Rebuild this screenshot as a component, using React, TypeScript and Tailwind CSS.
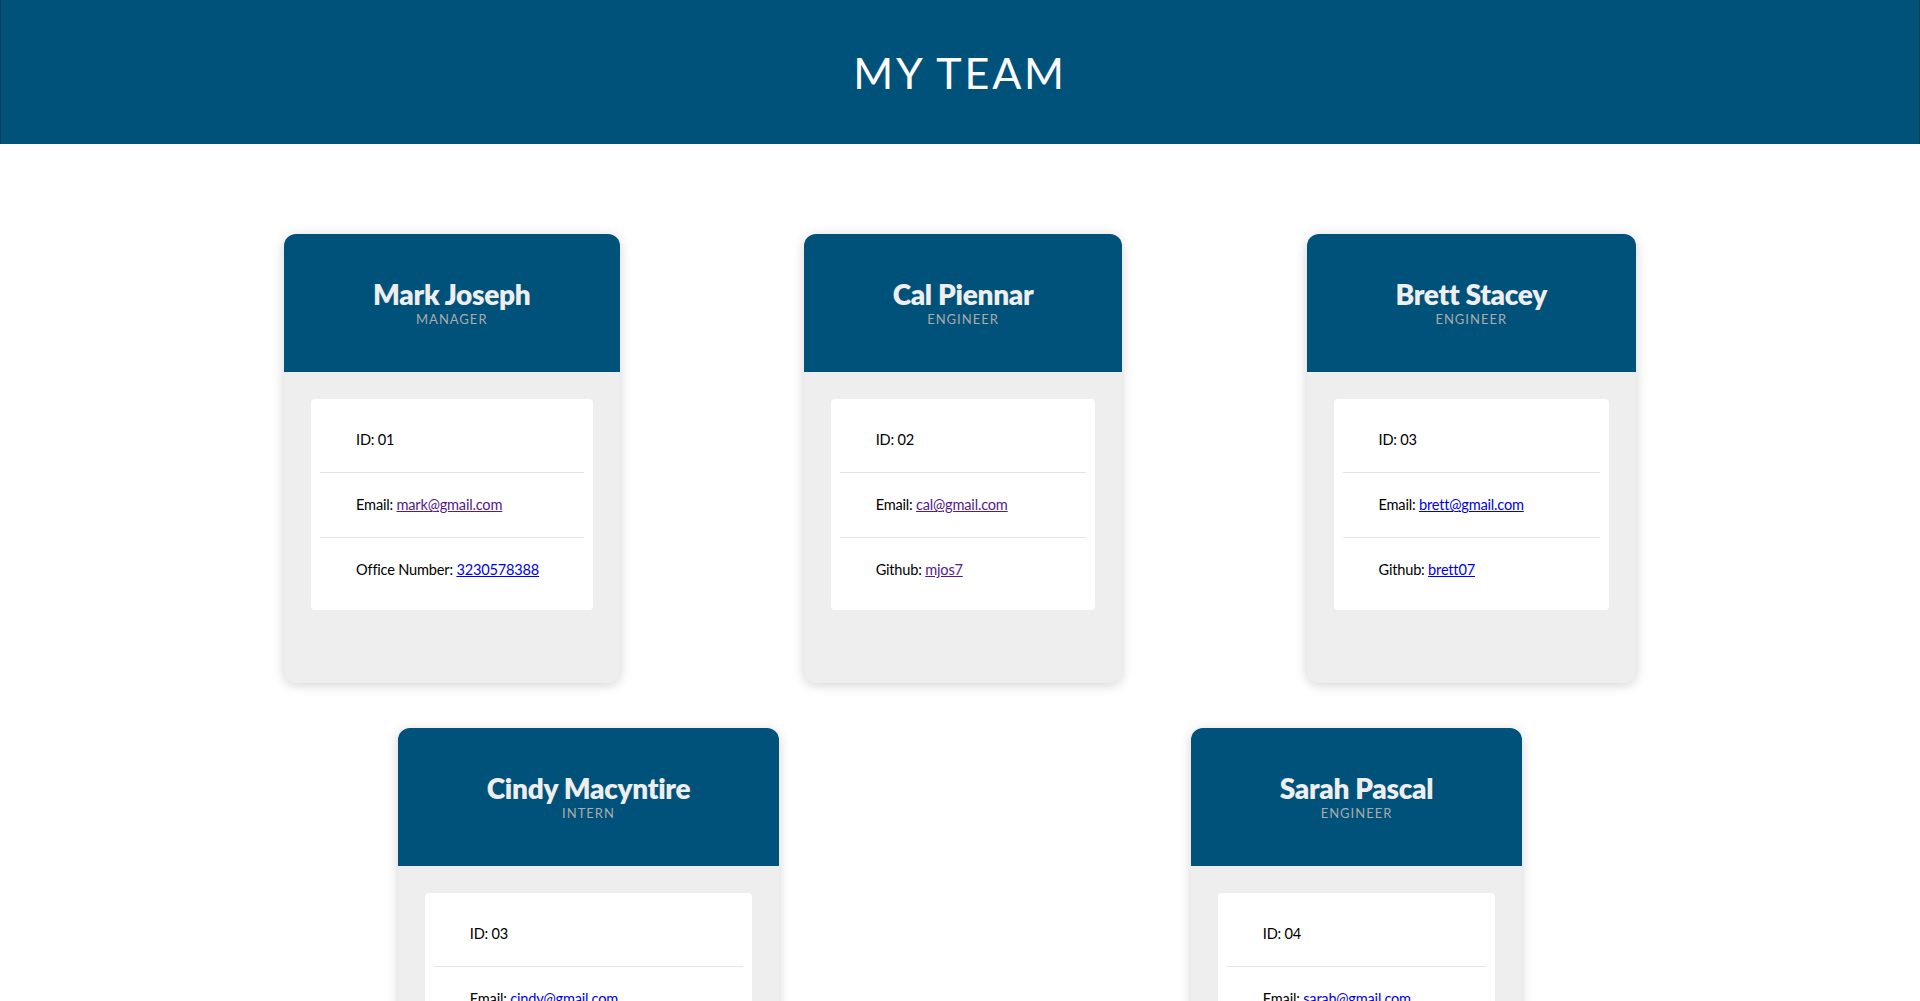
import React from "react";

type Line = { label: string; value?: string; link?: boolean; visited?: boolean };
type Member = { name: string; role: string; lines: Line[] };

const team: Member[] = [
  {
    name: "Mark Joseph",
    role: "Manager",
    lines: [
      { label: "ID: 01" },
      { label: "Email: ", value: "mark@gmail.com", link: true, visited: true },
      { label: "Office Number: ", value: "3230578388", link: true },
    ],
  },
  {
    name: "Cal Piennar",
    role: "Engineer",
    lines: [
      { label: "ID: 02" },
      { label: "Email: ", value: "cal@gmail.com", link: true, visited: true },
      { label: "Github: ", value: "mjos7", link: true, visited: true },
    ],
  },
  {
    name: "Brett Stacey",
    role: "Engineer",
    lines: [
      { label: "ID: 03" },
      { label: "Email: ", value: "brett@gmail.com", link: true },
      { label: "Github: ", value: "brett07", link: true },
    ],
  },
  {
    name: "Cindy Macyntire",
    role: "Intern",
    lines: [
      { label: "ID: 03" },
      { label: "Email: ", value: "cindy@gmail.com", link: true },
      { label: "School: ", value: "UCLA" },
    ],
  },
  {
    name: "Sarah Pascal",
    role: "Engineer",
    lines: [
      { label: "ID: 04" },
      { label: "Email: ", value: "sarah@gmail.com", link: true },
      { label: "Github: ", value: "sarah04", link: true },
    ],
  },
];

function Card({ m }: { m: Member }) {
  return (
    <div className="mx-10 flex flex-col rounded-xl overflow-hidden bg-[#eeeeee] shadow-[0_2px_12px_rgba(0,0,0,0.18)]">
      <div className="bg-[#01527a] px-[89px] pt-[44px] pb-[45px] text-center">
        <div className="text-[28px] leading-[1.2] font-extrabold tracking-[-0.3px] text-[#eeeeee] whitespace-nowrap">{m.name}</div>
        <div className="text-[13px] leading-[1.2] uppercase tracking-[1px] text-[#ababab]">{m.role}</div>
      </div>
      <div className="px-[27px] pt-[27px] pb-[73px]">
        <ul className="bg-white rounded-[4px] px-[9px] pt-[9px] pb-[8px]">
          {m.lines.map((l, i) => (
            <li
              key={i}
              className={
                "pl-[36px] pr-4 py-[22px] text-[14.6px] leading-[20px] tracking-[-0.2px] text-black whitespace-nowrap " +
                (i < m.lines.length - 1 ? "border-b border-[#e6e6e6]" : "")
              }
            >
              {l.label}
              {l.value &&
                (l.link ? (
                  <a
                    href="#"
                    className={"underline " + (l.visited ? "text-[#551a8b]" : "text-[#0000ee]")}
                  >
                    {l.value}
                  </a>
                ) : (
                  <span>{l.value}</span>
                ))}
            </li>
          ))}
        </ul>
      </div>
    </div>
  );
}

export default function App() {
  return (
    <div className="min-h-screen bg-white font-['Lato','Noto_Sans',sans-serif]">
      <header className="h-[144px] bg-[#01527a] border-x border-[#0b3f5a] flex items-center justify-center">
        <h1 className="text-[43px] leading-none font-normal text-white tracking-[2.8px]">MY TEAM</h1>
      </header>
      <main className="w-4/5 mx-auto pt-[90px] pb-16 flex flex-wrap justify-around items-start gap-y-[45px]">
        {team.map((m) => (
          <Card key={m.name} m={m} />
        ))}
      </main>
    </div>
  );
}
